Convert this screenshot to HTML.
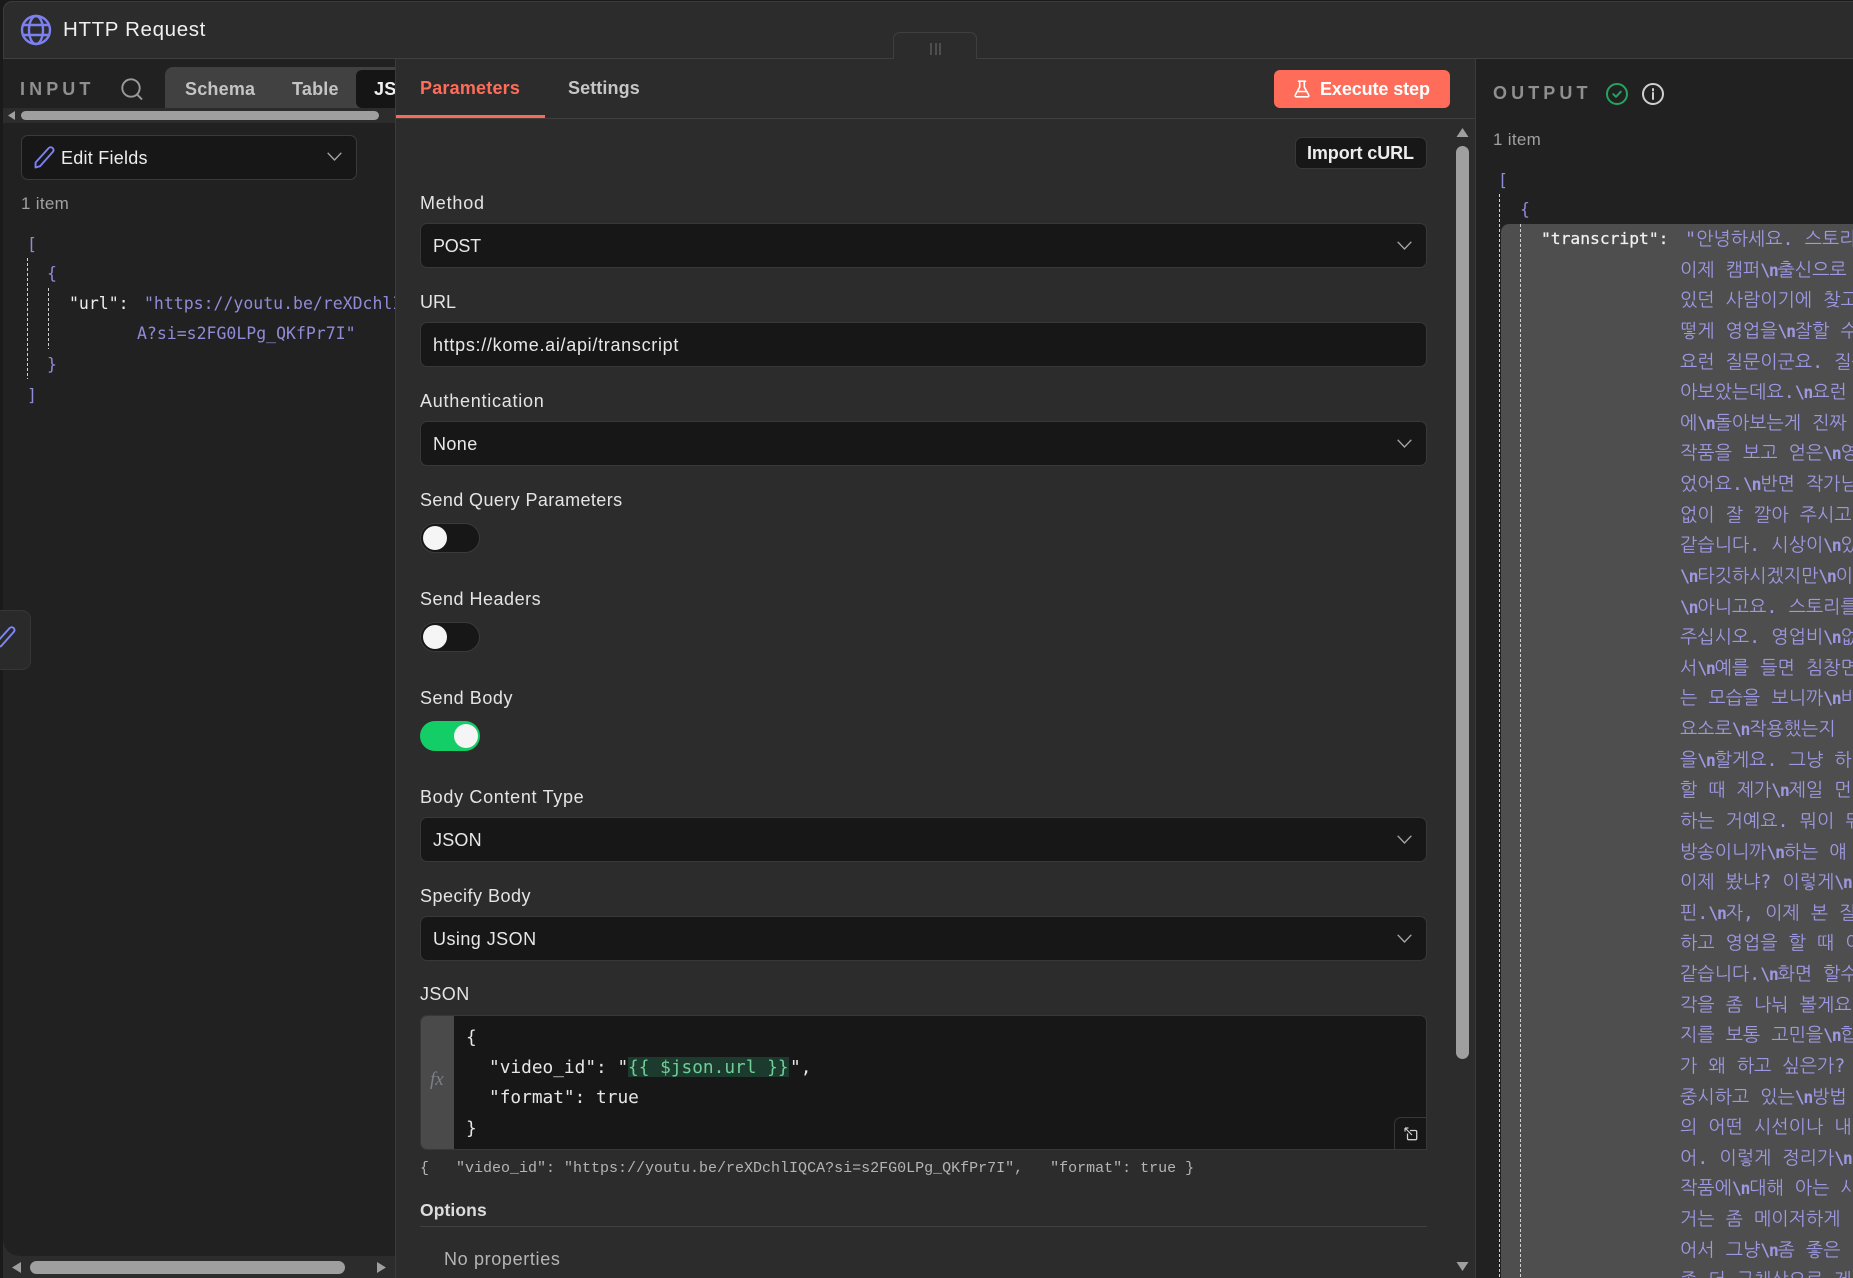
<!DOCTYPE html>
<html lang="en"><head><meta charset="utf-8"><title>HTTP Request</title>
<style>
html,body{margin:0;padding:0;width:1853px;height:1278px;overflow:hidden;background:#1a1a1a}
body{position:relative;font-family:"Liberation Sans","Noto Sans CJK KR",sans-serif;color:#e6e6e6}
.a{position:absolute;box-sizing:border-box}
.t{position:absolute;white-space:pre;line-height:24px;height:24px;font-size:18px}
.l{color:#e4e4e4;letter-spacing:.4px;left:420px}
.b{font-weight:bold;font-size:18px;letter-spacing:.2px}
.sel{position:absolute;box-sizing:border-box;left:420px;width:1007px;height:45px;background:#171717;border:1px solid #383838;border-radius:7px}
.val{left:433px;color:#e8e8e8;font-size:18px;letter-spacing:.2px}
.m{font-family:"DejaVu Sans Mono","Liberation Mono",monospace;font-size:16.5px}
.p{color:#908bd8}
.dash{position:absolute;width:1px;background:repeating-linear-gradient(to bottom,#cfcfcf 0 3px,transparent 3px 5px)}
svg{position:absolute;overflow:visible}
#tr{position:absolute;left:1680px;top:225px;color:#9d98e2;font-family:"DejaVu Sans Mono","NanumGothic","Noto Sans CJK KR",monospace;font-size:18.4px;line-height:30.64px;white-space:pre}
#tr div{height:30.64px;overflow:visible}
#tr i{font-style:normal;font-weight:bold;font-family:"DejaVu Sans Mono",monospace;font-size:16.5px;letter-spacing:-1.3px}
.ed{position:absolute;font-family:"DejaVu Sans Mono",monospace;font-size:17.8px;line-height:24px;height:24px;white-space:pre;color:#e6e6e6}
</style></head><body>

<!-- modal -->
<div class="a" style="left:3px;top:1px;width:1850px;height:1277px;background:#2c2c2c;border-top-left-radius:9px;border-left:1px solid #3c3c3c;border-top:1px solid #3c3c3c"></div>
<div class="a" style="left:3px;top:58px;width:1850px;height:1px;background:#3f3f3f"></div>

<svg style="left:20px;top:14px" width="32" height="32" viewBox="0 0 32 32" fill="none" stroke="#7d80f0" stroke-width="2.4"><circle cx="16" cy="16" r="14"/><ellipse cx="16" cy="16" rx="7" ry="14"/><path d="M3.5 11H28.5M3.5 21H28.5"/></svg>
<div class="t" style="left:63px;top:18px;font-size:20.5px;color:#f0f0f0;letter-spacing:.65px">HTTP Request</div>

<!-- drag handle -->
<div class="a" style="left:893px;top:32px;width:84px;height:27px;background:#2c2c2c;border:1px solid #3f3f3f;border-bottom:none;border-radius:7px 7px 0 0"></div>
<div class="a" style="left:930px;top:43px;width:2px;height:12px;background:#4e4e4e"></div>
<div class="a" style="left:935px;top:43px;width:2px;height:12px;background:#4e4e4e"></div>
<div class="a" style="left:939px;top:43px;width:2px;height:12px;background:#4e4e4e"></div>

<!-- left panel -->
<div class="a" style="left:3px;top:59px;width:392px;height:1219px;background:#212121"></div>
<div class="t" style="left:20px;top:77px;color:#8f8f8f;font-size:18px;font-weight:bold;letter-spacing:4.1px">INPUT</div>
<svg style="left:120px;top:77px" width="24" height="24" viewBox="0 0 24 24" fill="none" stroke="#9a9a9a" stroke-width="1.9"><circle cx="11" cy="11" r="8.7"/><path d="M17 17.4L21.5 21.9" stroke-linecap="round"/></svg>
<div class="a" style="left:165px;top:67px;width:230px;height:41px;background:#414141;border-radius:8px 0 0 0"></div>
<div class="t b" style="left:185px;top:77px;color:#c4c4c4">Schema</div>
<div class="t b" style="left:292px;top:77px;color:#c4c4c4">Table</div>
<div class="a" style="left:356px;top:70px;width:60px;height:38px;background:#151515;border-radius:6px"></div>
<div class="t b" style="left:374px;top:77px;color:#f0f0f0">JSON</div>

<div class="a" style="left:3px;top:108px;width:392px;height:15px;background:#2c2c2c"></div>
<div class="a" style="left:21px;top:111px;width:358px;height:9px;background:#9f9f9f;border-radius:5px"></div>
<svg style="left:8px;top:111px" width="8" height="9"><path d="M7 0V9L0 4.5Z" fill="#9f9f9f"/></svg>

<div class="a" style="left:21px;top:135px;width:336px;height:45px;background:#171717;border:1px solid #3a3a3a;border-radius:7px"></div>
<svg style="left:33px;top:146px" width="22" height="23" viewBox="0 0 22 23" fill="none" stroke="#7d80f0" stroke-width="1.9"><path d="M2.5 21.5L2.6 16.5L15.5 2.2C16.8 1 18.4 1 19.6 2C20.8 3.2 20.8 4.7 19.7 6L7 20.2Z" stroke-linejoin="round"/></svg>
<div class="t" style="left:61px;top:146px;font-size:18px;color:#ededed;letter-spacing:.25px">Edit Fields</div>
<svg style="left:327px;top:152px" width="15" height="9" fill="none" stroke="#a5a5a5" stroke-width="1.4"><path d="M.7.8L7.5 8L14.3.8"/></svg>
<div class="t" style="left:21px;top:192px;font-size:17px;color:#a0a0a0;letter-spacing:.3px">1 item</div>

<div class="dash" style="left:27px;top:258px;height:121px"></div>
<div class="dash" style="left:48px;top:288px;height:61px"></div>
<div class="t m p" style="left:27px;top:233px">[</div>
<div class="t m p" style="left:47px;top:262px">{</div>
<div class="t m" style="left:69px;top:292px;color:#ededed">"url":</div>
<div class="t m p" style="left:144px;top:292px">"https://youtu.be/reXDchlIQC</div>
<div class="t m p" style="left:137px;top:322px">A?si=s2FG0LPg_QKfPr7I"</div>
<div class="t m p" style="left:47px;top:353px">}</div>
<div class="t m p" style="left:27px;top:384px">]</div>

<div class="a" style="left:3px;top:1256px;width:392px;height:22px;background:#2c2c2c"></div>
<div class="a" style="left:3px;top:1240px;width:16px;height:16px;background:radial-gradient(circle at 100% 0,#212121 15.5px,#2c2c2c 16px)"></div>
<div class="a" style="left:30px;top:1261px;width:315px;height:13px;background:#9f9f9f;border-radius:7px"></div>
<svg style="left:12px;top:1262px" width="9" height="11"><path d="M9 0V11L0 5.5Z" fill="#9f9f9f"/></svg>
<svg style="left:377px;top:1262px" width="9" height="11"><path d="M0 0V11L9 5.5Z" fill="#9f9f9f"/></svg>

<!-- floating tab -->
<div class="a" style="left:-10px;top:610px;width:41px;height:60px;background:#2a2a2a;border:1px solid #363636;border-radius:9px"></div>
<svg style="left:-6px;top:626px" width="22" height="24" viewBox="0 0 22 24" fill="none" stroke="#7d88f2" stroke-width="1.9"><path d="M2.5 21.5L2.6 16.5L15.5 2.2C16.8 1 18.4 1 19.6 2C20.8 3.2 20.8 4.7 19.7 6L7 20.2Z" stroke-linejoin="round"/></svg>

<!-- centre panel -->
<div class="a" style="left:395px;top:59px;width:1081px;height:1219px;background:#2c2c2c;border-left:1px solid #3b3b3b;border-right:1px solid #3b3b3b"></div>
<div class="a" style="left:396px;top:118px;width:1079px;height:1px;background:#3f3f3f"></div>
<div class="a" style="left:396px;top:115px;width:149px;height:3px;background:#f66a57"></div>
<div class="t b" style="left:420px;top:76px;color:#ff6d5a">Parameters</div>
<div class="t b" style="left:568px;top:76px;color:#c6c6c6;letter-spacing:.1px">Settings</div>

<div class="a" style="left:1274px;top:70px;width:176px;height:38px;background:#ff6d5a;border-radius:6px"></div>
<svg style="left:1294px;top:80px" width="16" height="18" viewBox="0 0 16 18" fill="none" stroke="#fff" stroke-width="1.6" stroke-linejoin="round" stroke-linecap="round"><path d="M4.5 1.2H11.5M5.7 1.2V7L1.3 15C.9 16 1.4 16.8 2.4 16.8H13.6C14.6 16.8 15.1 16 14.7 15L10.3 7V1.2M3.8 11.5H12.2"/></svg>
<div class="t b" style="left:1320px;top:77px;color:#fff;letter-spacing:-.1px">Execute step</div>

<div class="a" style="left:1295px;top:137px;width:132px;height:32px;background:#171717;border:1px solid #383838;border-radius:7px"></div>
<div class="t b" style="left:1307px;top:141px;color:#ededed;letter-spacing:-.1px">Import cURL</div>

<svg style="left:1456px;top:128px" width="13" height="9"><path d="M6.5 0L12.5 9H.5Z" fill="#9f9f9f"/></svg>
<div class="a" style="left:1456px;top:146px;width:13px;height:913px;background:#9f9f9f;border-radius:7px"></div>
<svg style="left:1456px;top:1262px" width="13" height="9"><path d="M.5 0H12.5L6.5 9Z" fill="#9f9f9f"/></svg>

<!-- form -->
<div class="t l" style="top:191px;letter-spacing:.8px">Method</div>
<div class="sel" style="top:223px"></div>
<div class="t val" style="top:234px;letter-spacing:-.3px">POST</div>
<svg style="left:1397px;top:241px" width="15" height="9" fill="none" stroke="#a5a5a5" stroke-width="1.4"><path d="M.7.8L7.5 8L14.3.8"/></svg>

<div class="t l" style="top:290px;letter-spacing:0">URL</div>
<div class="sel" style="top:322px"></div>
<div class="t val" style="top:333px;letter-spacing:.7px">https://kome.ai/api/transcript</div>

<div class="t l" style="top:389px;letter-spacing:.74px">Authentication</div>
<div class="sel" style="top:421px"></div>
<div class="t val" style="top:432px;letter-spacing:.4px">None</div>
<svg style="left:1397px;top:439px" width="15" height="9" fill="none" stroke="#a5a5a5" stroke-width="1.4"><path d="M.7.8L7.5 8L14.3.8"/></svg>

<div class="t l" style="top:488px">Send Query Parameters</div>
<div class="a" style="left:420px;top:523px;width:60px;height:30px;background:#171717;border:1px solid #3a3a3a;border-radius:15px"></div>
<div class="a" style="left:423px;top:526px;width:24px;height:24px;background:#f5f5f5;border-radius:50%"></div>

<div class="t l" style="top:587px;letter-spacing:.5px">Send Headers</div>
<div class="a" style="left:420px;top:622px;width:60px;height:30px;background:#171717;border:1px solid #3a3a3a;border-radius:15px"></div>
<div class="a" style="left:423px;top:625px;width:24px;height:24px;background:#f5f5f5;border-radius:50%"></div>

<div class="t l" style="top:686px;letter-spacing:.55px">Send Body</div>
<div class="a" style="left:420px;top:721px;width:60px;height:30px;background:#13ce66;border-radius:15px"></div>
<div class="a" style="left:454px;top:724px;width:24px;height:24px;background:#f5f5f5;border-radius:50%"></div>

<div class="t l" style="top:785px;letter-spacing:.68px">Body Content Type</div>
<div class="sel" style="top:817px"></div>
<div class="t val" style="top:828px">JSON</div>
<svg style="left:1397px;top:835px" width="15" height="9" fill="none" stroke="#a5a5a5" stroke-width="1.4"><path d="M.7.8L7.5 8L14.3.8"/></svg>

<div class="t l" style="top:884px;letter-spacing:.5px">Specify Body</div>
<div class="sel" style="top:916px"></div>
<div class="t val" style="top:927px;letter-spacing:.45px">Using JSON</div>
<svg style="left:1397px;top:934px" width="15" height="9" fill="none" stroke="#a5a5a5" stroke-width="1.4"><path d="M.7.8L7.5 8L14.3.8"/></svg>

<div class="t l" style="top:982px">JSON</div>
<div class="a" style="left:420px;top:1015px;width:1007px;height:135px;background:#171717;border:1px solid #383838;border-radius:7px;overflow:hidden">
  <div class="a" style="left:0;top:0;width:33px;height:135px;background:#4a4a4a"></div>
</div>
<div class="t" style="left:430px;top:1068px;font-family:'Liberation Serif',serif;font-style:italic;font-size:19px;color:#7b7f88">fx</div>
<div class="ed" style="left:466px;top:1026px">{</div>
<div class="ed" style="left:489px;top:1056px">"video_id": "</div>
<div class="a" style="left:628px;top:1057px;width:161px;height:20px;background:#1c3a2d"></div>
<div class="ed" style="left:628px;top:1056px;color:#6fcf97">{{ $json.url }}</div>
<div class="ed" style="left:790px;top:1056px">",</div>
<div class="ed" style="left:489px;top:1086px">"format": true</div>
<div class="ed" style="left:466px;top:1117px">}</div>
<div class="a" style="left:1394px;top:1117px;width:33px;height:33px;background:#171717;border:1px solid #383838;border-radius:7px 0 0 0"></div>
<svg style="left:1404px;top:1127px" width="14" height="14" viewBox="0 0 14 14" fill="none" stroke="#d0d0d0" stroke-width="1.3"><path d="M6 3.5H11.5Q12.7 3.5 12.7 4.7V11.5Q12.7 12.7 11.5 12.7H4.7Q3.5 12.7 3.5 11.5V6.5"/><path d="M1 1L8 8M1 1H4.5M1 1V4.5" stroke-width="1.2"/></svg>

<div class="t" style="left:420px;top:1157px;font-family:'Liberation Mono',monospace;font-size:15px;color:#b4b4b4">{   "video_id": "https://youtu.be/reXDchlIQCA?si=s2FG0LPg_QKfPr7I",   "format": true }</div>

<div class="t l" style="top:1198px;font-weight:bold;font-size:17.5px;letter-spacing:.1px;color:#dcdcdc">Options</div>
<div class="a" style="left:420px;top:1226px;width:1007px;height:1px;background:#404040"></div>
<div class="t" style="left:444px;top:1247px;font-size:18px;color:#b5b5b5;letter-spacing:.65px">No properties</div>

<!-- output panel -->
<div class="a" style="left:1476px;top:59px;width:377px;height:1219px;background:#212121"></div>
<div class="t" style="left:1493px;top:81px;color:#8f8f8f;font-size:18px;font-weight:bold;letter-spacing:4.1px">OUTPUT</div>
<svg style="left:1606px;top:83px" width="22" height="22" viewBox="0 0 22 22" fill="none" stroke="#26a35f" stroke-width="2"><circle cx="11" cy="11" r="10"/><path d="M7.3 11.2L10 13.8L14.8 8.7" stroke-linecap="round" stroke-linejoin="round"/></svg>
<svg style="left:1642px;top:83px" width="22" height="22" viewBox="0 0 22 22" fill="none" stroke="#cfcfcf" stroke-width="2"><circle cx="11" cy="11" r="10"/><path d="M11 10V16M11 6V7.5" stroke-linecap="round"/></svg>
<div class="t" style="left:1493px;top:128px;font-size:17px;color:#a0a0a0;letter-spacing:.3px">1 item</div>
<div class="t m p" style="left:1498px;top:169px">[</div>
<div class="t m p" style="left:1520px;top:198px">{</div>
<div class="a" style="left:1501px;top:224px;width:352px;height:1054px;background:#4e4e4e;border-top-left-radius:8px"></div>
<div class="dash" style="left:1499px;top:194px;height:1084px"></div>
<div class="dash" style="left:1520px;top:224px;height:1054px"></div>
<div class="t m" style="left:1541px;top:227px;color:#f0f0f0;font-size:16.3px;-webkit-text-stroke:.25px #f0f0f0">"transcript":</div>

<div id="tr"><div><span style="margin-left:5px"></span>"안녕하세요. 스토리를</div><div>이제 캠퍼<i>\n</i>출신으로</div><div>있던 사람이기에 찾고</div><div>떻게 영업을<i>\n</i>잘할 수</div><div>요런 질문이군요. 질문</div><div>아보았는데요.<i>\n</i>요런</div><div>에<i>\n</i>돌아보는게 진짜</div><div>작품을 보고 얻은<i>\n</i>영</div><div>었어요.<i>\n</i>반면 작가님</div><div>없이 잘 깔아 주시고</div><div>같습니다. 시상이<i>\n</i>있</div><div><i>\n</i>타깃하시겠지만<i>\n</i>이</div><div><i>\n</i>아니고요. 스토리를</div><div>주십시오. 영업비<i>\n</i>없</div><div>서<i>\n</i>예를 들면 침창면</div><div>는 모습을 보니까<i>\n</i>비</div><div>요소로<i>\n</i>작용했는지 </div><div>을<i>\n</i>할게요. 그냥 하</div><div>할 때 제가<i>\n</i>제일 먼</div><div>하는 거예요. 뭐이 뭐</div><div>방송이니까<i>\n</i>하는 얘</div><div>이제 봤냐? 이렇게<i>\n</i></div><div>핀.<i>\n</i>자, 이제 본 질</div><div>하고 영업을 할 때 이</div><div>같습니다.<i>\n</i>화면 할수</div><div>각을 좀 나눠 볼게요</div><div>지를 보통 고민을<i>\n</i>합</div><div>가 왜 하고 싶은가? </div><div>중시하고 있는<i>\n</i>방법</div><div>의 어떤 시선이나 내</div><div>어. 이렇게 정리가<i>\n</i></div><div>작품에<i>\n</i>대해 아는 사</div><div>거는 좀 메이저하게 </div><div>어서 그냥<i>\n</i>좀 좋은</div><div>좀 더 구체상으로 제</div></div>

</body></html>
